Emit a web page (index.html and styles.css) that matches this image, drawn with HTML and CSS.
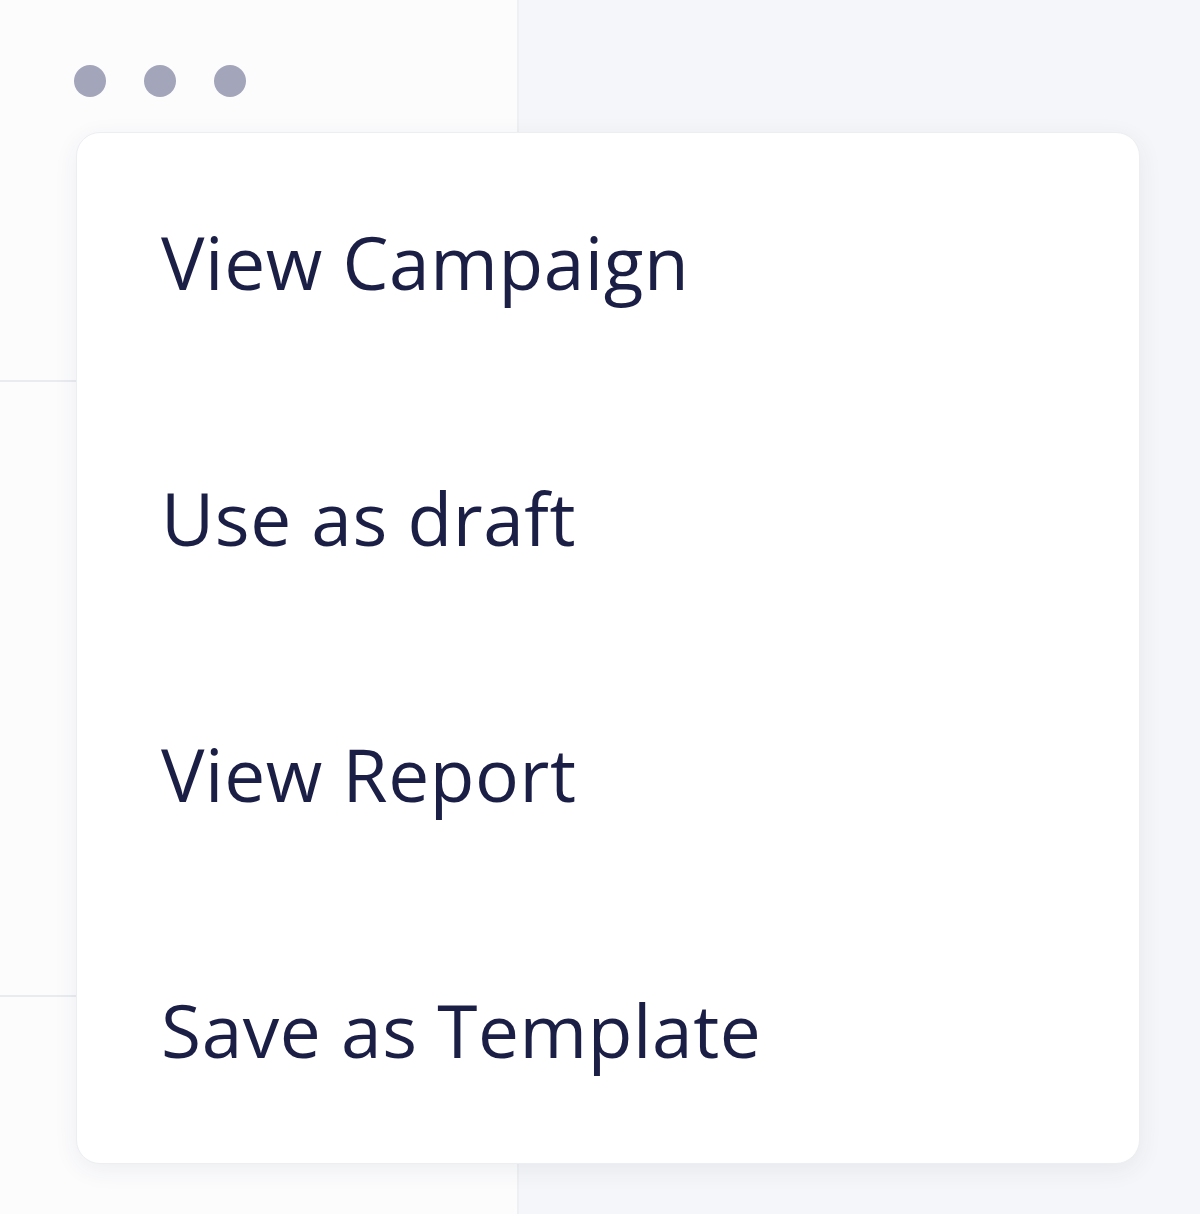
FILE: index.html
```html
<!DOCTYPE html>
<html lang="en">
<head>
  <meta charset="UTF-8">
  <meta name="viewport" content="width=device-width, initial-scale=1.0">
  <title>Campaign actions</title>
  <link rel="stylesheet" href="styles.css">
</head>
<body>
  <div class="page">
    <div class="list">
      <div class="row row-first">
        <button class="more" aria-label="More actions">
          <span class="dot"></span>
          <span class="dot"></span>
          <span class="dot"></span>
        </button>
      </div>
      <div class="row row-mid"></div>
      <div class="row row-last"></div>
    </div>
    <div class="side"></div>

    <!-- dropdown opened from the dots button -->
    <ul class="menu">
      <li class="menu-item">View Campaign</li>
      <li class="menu-item">Use as draft</li>
      <li class="menu-item">View Report</li>
      <li class="menu-item">Save as Template</li>
    </ul>
  </div>
</body>
</html>
```

FILE: styles.css
```css
* {
  box-sizing: border-box;
}
body {
  margin: 0;
  font-family: "Open Sans", Lato, sans-serif;
  background-color: #f5f6f9;
}
.page {
  position: relative;
  display: grid;
  grid-template-columns: 519px 1fr;
  height: 1214px;
  overflow: hidden;
}
.list {
  background: #fcfcfd;
  border-right: 2px solid #eef0f3;
}
.row {
  border-bottom: 2px solid #e9ebef;
}
.row-first {
  height: 382px;
  padding: 65px 0 0 74px;
}
.row-mid {
  height: 615px;
}
.row-last {
  border-bottom: none;
}
.side {
  background: #f5f6f9;
}
.more {
  display: flex;
  gap: 38px;
  padding: 0;
  border: none;
  background: none;
  cursor: pointer;
}
.dot {
  width: 32px;
  height: 32px;
  border-radius: 50%;
  background-color: #a3a6bb;
}
.menu {
  position: absolute;
  top: 132px;
  left: 76px;
  width: 1064px;
  margin: 0;
  padding: 0 0 6px;
  list-style: none;
  background: #fff;
  border: 1.5px solid #eceef2;
  border-radius: 24px;
  box-shadow: 0 6px 24px rgba(40, 50, 90, 0.07);
}
.menu-item {
  display: flex;
  align-items: center;
  height: 256px;
  padding-left: 84px;
  font-size: 73px;
  font-weight: 400;
  letter-spacing: 0.6px;
  color: #1b1e45;
  cursor: pointer;
}
```
